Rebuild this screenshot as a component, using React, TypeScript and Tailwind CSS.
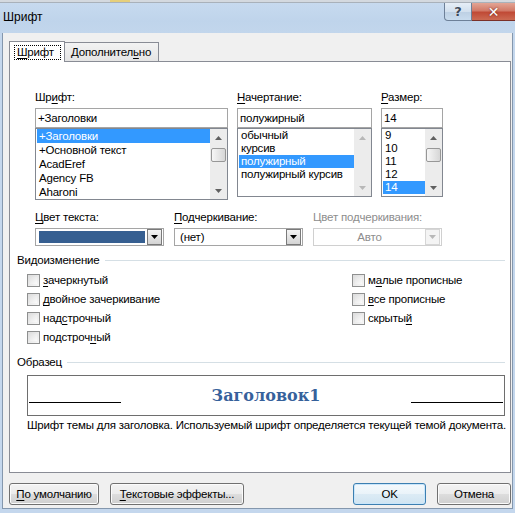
import React from "react";

function Tri({ down = false, color = "#404040" }: { down?: boolean; color?: string }) {
  return (
    <svg width="7" height="4" viewBox="0 0 7 4">
      {down ? <path d="M0 0H7L3.5 4Z" fill={color} /> : <path d="M0 4H7L3.5 0Z" fill={color} />}
    </svg>
  );
}

function VScroll({ thumb, disabled }: { thumb?: boolean; disabled?: boolean }) {
  const c = disabled ? "#b8b8b8" : "#606060";
  return (
    <div className="w-[17px] shrink-0 flex flex-col bg-[#ececec]">
      <div className="h-[17px] flex items-center justify-center">
        <Tri color={c} />
      </div>
      <div className="flex-1 flex flex-col">
        {thumb && (
          <div className="mt-[2px] mx-[1px] h-[14px] rounded-[2px] border border-[#979797] bg-[linear-gradient(to_right,#f6f6f6,#e6e6e6_50%,#d6d6d6)]" />
        )}
      </div>
      <div className="h-[17px] flex items-center justify-center">
        <Tri down color={c} />
      </div>
    </div>
  );
}

function ListBox({
  box,
  row,
  items,
  sel,
  thumb,
  disabledScroll,
}: {
  box: string;
  row: string;
  items: string[];
  sel: number;
  thumb?: boolean;
  disabledScroll?: boolean;
}) {
  return (
    <div className={`${box} border border-[#828790] bg-white flex`}>
      <div className="flex-1 flex flex-col overflow-hidden">
        {items.map((it, i) => (
          <div
            key={it}
            className={`${row} ml-[1px] pl-[2px] whitespace-nowrap ${i === sel ? "bg-[#3399ff] text-white" : ""}`}
          >
            {it}
          </div>
        ))}
      </div>
      <VScroll thumb={thumb} disabled={disabledScroll} />
    </div>
  );
}

function Input({ w, value }: { w: string; value: string }) {
  return (
    <div className={`${w} h-[20px] border border-[#a5a5a5] bg-white flex items-center pl-[2px] leading-[18px]`}>
      {value}
    </div>
  );
}

function DropBtn({ disabled }: { disabled?: boolean }) {
  return (
    <div
      className={`w-[15px] h-[16px] mr-[1px] flex items-center justify-center border ${
        disabled
          ? "border-[#d6d6d6] bg-[#f4f4f4]"
          : "border-[#7a7a7a] bg-[linear-gradient(to_bottom,#f4f4f4,#e4e4e4_50%,#d4d4d4)]"
      }`}
    >
      <Tri down color={disabled ? "#b8b8b8" : "#000000"} />
    </div>
  );
}

function Check({ label }: { label: React.ReactNode }) {
  return (
    <div className="h-[19px] flex items-center">
      <div className="w-[13px] h-[13px] border border-[#8e8f8f] bg-[linear-gradient(135deg,#dcdcdc,#f8f8f8)] p-[2px]">
        <div className="w-full h-full bg-[linear-gradient(135deg,#e2e2e2,#fbfbfb)]" />
      </div>
      <span className="ml-[3px] leading-[15px]">{label}</span>
    </div>
  );
}

function U({ children }: { children: React.ReactNode }) {
  return <span className="underline underline-offset-2 decoration-1">{children}</span>;
}

function Btn({ w, children, def }: { w: string; children: React.ReactNode; def?: boolean }) {
  return (
    <div
      className={`${w} h-[22px] rounded-[3px] border flex items-center justify-center leading-[15px] ${
        def
          ? "border-[#3c7fb1] bg-[linear-gradient(to_bottom,#f4f9fc_0%,#eaf3f9_50%,#dcebf5_51%,#d0e4f1_100%)] shadow-[inset_0_0_0_1px_#c9e6fb]"
          : "border-[#707070] bg-[linear-gradient(to_bottom,#f3f3f3_0%,#ebebeb_50%,#dddddd_51%,#cfcfcf_100%)] shadow-[inset_0_0_0_1px_#fbfbfb]"
      }`}
    >
      {children}
    </div>
  );
}

export default function App() {
  return (
    <div className="w-[515px] h-[513px] overflow-hidden flex flex-col bg-[#c4d7ed] font-['Liberation_Sans',Arial,sans-serif] text-[11.5px] tracking-[-0.2px] text-black">
      {/* background strip */}
      <div className="h-[3px] bg-[#d4d9df] border-b border-[#a9b1ba] flex">
        <div className="ml-[110px] w-[20px] bg-[#e6cf7a]" />
      </div>
      {/* title bar */}
      <div className="h-[30px] flex bg-[linear-gradient(to_bottom,#c7daef,#bfd4eb_60%,#c2d6ec)]">
        <div className="pl-[3px] pt-[7px] leading-[15px] text-[12px] tracking-normal">Шрифт</div>
        <div className="ml-auto flex h-[18px]">
          <div className="w-[28px] rounded-bl-[4px] border border-t-0 border-[#6d8098] bg-[linear-gradient(to_bottom,#e6eef7,#d2e0ee_50%,#bccfe3_51%,#c9dcee)] flex items-center justify-center">
            <span className="font-['DejaVu_Sans',sans-serif] font-bold text-[13px] leading-none text-[#3c4a5a] [text-shadow:0_0_1px_#fff]">?</span>
          </div>
          <div className="w-[43px] border-b border-[#7a3028] bg-[linear-gradient(to_bottom,#e3a595,#d27a68_45%,#c04a36_55%,#cc6a52)] flex items-center justify-center">
            <span className="font-['DejaVu_Sans',sans-serif] font-bold text-[14px] leading-none text-white [text-shadow:0_0_2px_#5a1a10]">✕</span>
          </div>
        </div>
      </div>
      {/* client */}
      <div className="flex-1 mx-[2px] mb-[4px] border-x border-b border-[#8497ad] bg-[#f0f0f0] flex flex-col pl-[6px] pr-[1px]">
        {/* tabs */}
        <div className="mt-[8px] flex items-end h-[20px]">
          <div className="relative z-10 w-[56px] h-[21px] -mb-px border border-b-0 border-[#898c95] bg-white flex items-start pl-[4px] pt-[3px]">
            <div className="border border-dotted border-black px-[2px] leading-[13px] w-[47px]">
              <U>Ш</U>рифт
            </div>
          </div>
          <div className="w-[94px] h-[19px] border border-l-0 border-b-0 border-[#898c95] bg-[linear-gradient(to_bottom,#f3f3f3,#e4e4e4)] flex items-center pl-[6px] leading-[15px]">
            Дополнител<U>ь</U>но
          </div>
        </div>
        {/* panel */}
        <div className="w-[502px] h-[412px] border border-[#898c95] bg-white flex flex-col">
          {/* row 1 */}
          <div className="mt-[28px] pl-[25px] flex gap-[9px] items-start">
            <div className="flex flex-col">
              <div className="h-[15px] leading-[15px] mb-[3px]">
                Шр<U>и</U>фт:
              </div>
              <Input w="w-[193px]" value="+Заголовки" />
              <ListBox
                box="w-[193px] h-[72px]"
                row="h-[14px] leading-[14px]"
                items={["+Заголовки", "+Основной текст", "AcadEref", "Agency FB", "Aharoni"]}
                sel={0}
                thumb
              />
            </div>
            <div className="flex flex-col">
              <div className="h-[15px] leading-[15px] mb-[3px]">
                <U>Н</U>ачертание:
              </div>
              <Input w="w-[135px]" value="полужирный" />
              <ListBox
                box="w-[135px] h-[69px]"
                row="h-[13px] leading-[13px]"
                items={["обычный", "курсив", "полужирный", "полужирный курсив"]}
                sel={2}
                disabledScroll
              />
            </div>
            <div className="flex flex-col">
              <div className="h-[15px] leading-[15px] mb-[3px]">
                <U>Р</U>азмер:
              </div>
              <Input w="w-[62px]" value="14" />
              <ListBox
                box="w-[62px] h-[69px]"
                row="h-[13px] leading-[13px]"
                items={["9", "10", "11", "12", "14"]}
                sel={4}
                thumb
              />
            </div>
          </div>
          {/* row 2 */}
          <div className="mt-[10px] pl-[25px] flex gap-[10px]">
            <div className="flex flex-col w-[129px]">
              <div className="h-[15px] leading-[15px] mb-[3px]">
                <U>Ц</U>вет текста:
              </div>
              <div className="h-[18px] border border-[#a5a5a5] bg-white flex items-center">
                <div className="ml-[3px] mr-[2px] flex-1 h-[12px] bg-[#365f91]" />
                <DropBtn />
              </div>
            </div>
            <div className="flex flex-col w-[129px]">
              <div className="h-[15px] leading-[15px] mb-[3px]">
                <U>П</U>одчеркивание:
              </div>
              <div className="h-[18px] border border-[#a5a5a5] bg-white flex items-center">
                <div className="flex-1 pl-[5px] leading-[15px]">(нет)</div>
                <DropBtn />
              </div>
            </div>
            <div className="flex flex-col w-[129px]">
              <div className="h-[15px] leading-[15px] mb-[3px] text-[#8d8d8d]">Цвет подчеркивания:</div>
              <div className="h-[18px] border border-[#d0d0d0] bg-white flex items-center">
                <div className="flex-1 text-center leading-[15px] text-[#8d8d8d]">Авто</div>
                <DropBtn disabled />
              </div>
            </div>
          </div>
          {/* Видоизменение */}
          <div className="mt-[7px] pl-[7px] pr-[5px] h-[15px] flex items-center">
            <span className="leading-[15px]">Видоизменение</span>
            <div className="ml-[5px] flex-1 h-px bg-[#d5dfe5]" />
          </div>
          <div className="mt-[3px] pl-[17px] flex">
            <div className="w-[325px] flex flex-col">
              <Check label={<><U>з</U>ачеркнутый</>} />
              <Check label={<><U>д</U>войное зачеркивание</>} />
              <Check label={<>над<U>с</U>трочный</>} />
              <Check label={<>подстроч<U>н</U>ый</>} />
            </div>
            <div className="flex flex-col">
              <Check label={<>м<U>а</U>лые прописные</>} />
              <Check label={<><U>в</U>се прописные</>} />
              <Check label={<>скрыты<U>й</U></>} />
            </div>
          </div>
          {/* Образец */}
          <div className="mt-[8px] pl-[7px] pr-[5px] h-[15px] flex items-center">
            <span className="leading-[15px]">Образец</span>
            <div className="ml-[5px] flex-1 h-px bg-[#d5dfe5]" />
          </div>
          <div className="mt-[5px] ml-[17px] w-[478px] h-[41px] border border-[#6e6e6e] bg-white flex justify-between px-[1px]">
            <div className="self-end mb-[12px] w-[92px] h-px bg-black" />
            <div className="self-center font-['DejaVu_Serif',serif] font-bold text-[16px] leading-[16px] tracking-normal text-[#36619b]">
              Заголовок1
            </div>
            <div className="self-end mb-[12px] w-[92px] h-px bg-black" />
          </div>
          <div className="mt-[2px] pl-[17px] leading-[15px] whitespace-nowrap">
            Шрифт темы для заголовка. Используемый шрифт определяется текущей темой документа.
          </div>
        </div>
        {/* buttons */}
        <div className="mt-[10px] flex">
          <Btn w="w-[90px]">
            <span>
              <U>П</U>о умолчанию
            </span>
          </Btn>
          <div className="ml-[11px]">
            <Btn w="w-[134px]">
              <span>
                <U>Т</U>екстовые эффекты...
              </span>
            </Btn>
          </div>
          <div className="ml-auto">
            <Btn w="w-[73px]" def>
              OK
            </Btn>
          </div>
          <div className="ml-[11px]">
            <Btn w="w-[74px]">Отмена</Btn>
          </div>
        </div>
      </div>
    </div>
  );
}
